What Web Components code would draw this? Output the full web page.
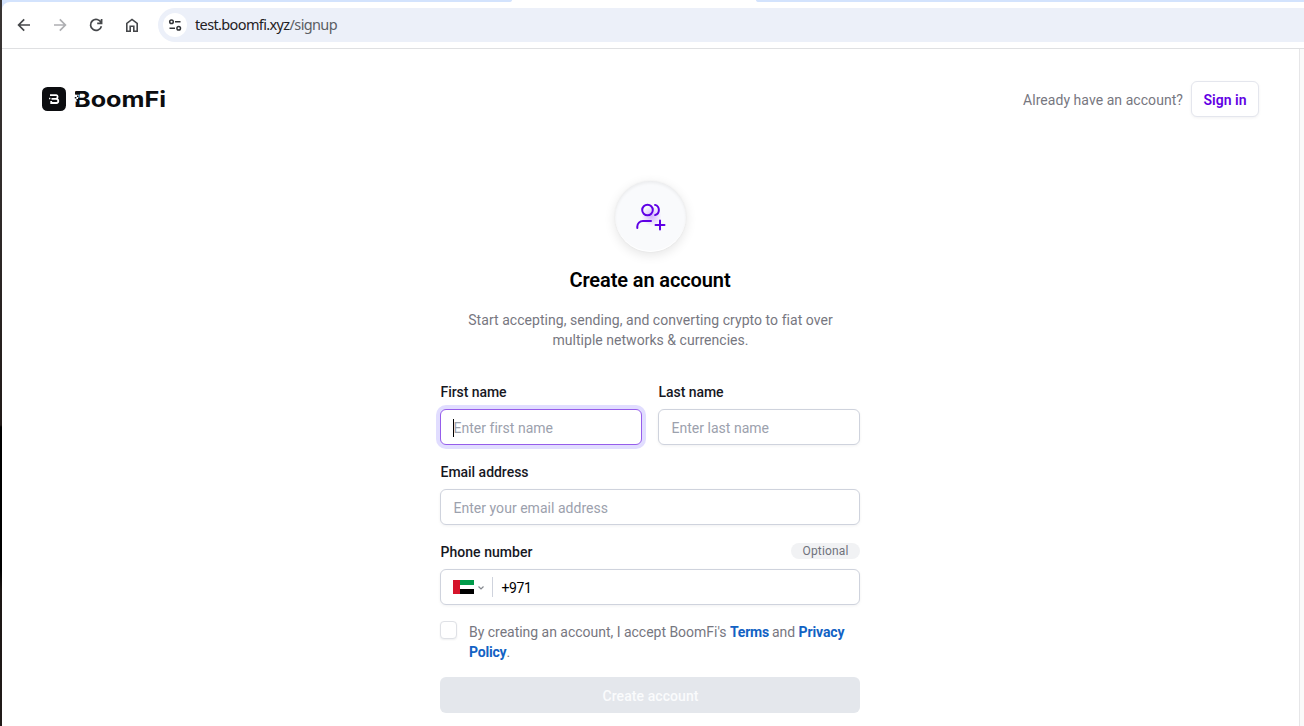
<!DOCTYPE html>
<html lang="en"><head><meta charset="utf-8"><title>BoomFi – Sign up</title>
<style>
html,body{margin:0;height:100%;overflow:hidden;background:#fff}
body{font-family:Roboto,"Liberation Sans",sans-serif;font-size:14px;line-height:20px;color:#77777f}
</style></head><body>
<browser-window></browser-window>
<script>
const define=(name,html,setup)=>customElements.define(name,class extends HTMLElement{
  constructor(){super();this.attachShadow({mode:'open'}).innerHTML=html;}
  connectedCallback(){if(setup)setup(this,this.shadowRoot);}
});

// Single line of text tracked to a given advance width.
define('fit-text',`<style>:host{display:inline-block;white-space:nowrap}span{display:inline-block}</style><span><slot></slot></span>`,(el,root)=>{
  const s=root.querySelector('span');
  s.style.letterSpacing='0';
  const n=el.textContent.length,w=+el.getAttribute('w');
  s.style.letterSpacing=((w-s.getBoundingClientRect().width)/n)+'px';
});

define('tool-bar',`<style>
:host{display:block}
.tabs{display:grid;grid-template-columns:510px 244px 1fr;height:2px;background:#fff}
.tabs i{background:#d3e3fd}.tabs i:first-child{border-bottom-right-radius:3px 2px}.tabs i:last-child{border-bottom-left-radius:3px 2px}
.bar{display:flex;align-items:center;height:46px;border-bottom:1px solid #dfe0e2;padding-left:12px;background:#fff;border-top-left-radius:8px}
.wrap{background:linear-gradient(90deg,#d3e3fd 9px,#fff 9px)}
svg{display:block;flex:none}
.nav{display:flex;gap:16px;margin-right:16px}
.omni{flex:1;display:flex;align-items:center;height:34px;border-radius:17px 0 0 17px;background:#ecf0f9;padding-left:5px;gap:8px;font:14.5px/20px "Noto Sans",sans-serif;color:#1f2023}
.omni fit-text{margin-bottom:2px}
.info{width:24px;height:24px;border-radius:50%;background:#fff;display:grid;place-items:center}
.path{color:#5b5e63}
</style>
<div class="tabs"><i></i><b></b><i></i></div>
<div class="wrap"><div class="bar"><div class="nav">
<svg width="20" height="20" fill="none" stroke="#45474a" stroke-width="1.7"><path d="M16 10H4.8M10.2 4.4 4.6 10l5.6 5.6"/></svg>
<svg width="20" height="20" fill="none" stroke="#aeafb2" stroke-width="1.7"><path d="M4 10h11.2M9.8 4.4l5.6 5.6-5.6 5.6"/></svg>
<svg width="20" height="20" fill="none" stroke="#45474a" stroke-width="1.7"><path d="M15.1 7.7A5.5 5.5 0 1 0 15.4 11.2M15.6 4v4.4h-4.4"/></svg>
<svg width="20" height="20" fill="none" stroke="#45474a" stroke-width="1.6"><path d="M4.8 16.2V8.3L10 4.4l5.2 3.9v7.9h-3.4v-4.9H8.2v4.9z"/></svg>
</div><div class="omni"><span class="info"><svg width="14" height="14" fill="none" stroke="#303236" stroke-width="1.5"><circle cx="3.5" cy="3.7" r="1.8"/><path d="M7 3.7h5.5M1.5 10.3H7"/><circle cx="10.7" cy="10.3" r="1.8"/></svg></span><fit-text w="142">test.boomfi.xyz<span class="path">/signup</span></fit-text></div></div></div>`);

define('boom-logo',`<style>
:host{display:flex;align-items:center;gap:8px;height:24px;color:#0c0d10}
svg{display:block;flex:none}
.name{position:relative;font:700 21.5px/24px Inter,sans-serif;width:91px}
.word{display:inline-block;transform-origin:0 50%}
.cut{position:absolute;left:0;top:0}
</style>
<svg width="24" height="24"><rect width="24" height="24" rx="5.5" fill="#0c0d10"/><path d="M8 8.1h6.4q1.2 0 1.2 1.6t-1.2 2.1q1.9.3 1.9 2.2T14.4 16H9.2v-2M9.5 11.8h5" fill="none" stroke="#fff" stroke-width="1.8"/><path d="M7 10.8h1.4v1.4H7z" fill="#fff"/></svg>
<div class="name"><span class="word">BoomFi</span><svg class="cut" width="10" height="24"><path d="M0 7.6h5v3H4v2.2H3v1.8H0z" fill="#fff"/><path d="M1 4.4h5v3H1zM.8 10h1.6v1.6H.8zM3 8.6h1.6v1.5H3zM2.4 12H4v1.5H2.4z" fill="#0c0d10"/></svg></div>`,(el,root)=>{
  const s=root.querySelector('.word');
  s.style.transform='scaleX('+92.5/s.offsetWidth+')';
});

define('site-header',`<style>
:host{display:flex;justify-content:space-between;align-items:center;height:36px;padding:32px 40px 0}
.right{display:flex;align-items:center;gap:8px}
button{font:600 14px/20px Roboto,sans-serif;color:#6200e4;width:68px;height:36px;padding:2px 0 0;border:1px solid #e4e6ed;border-radius:6px;background:#fff;box-shadow:0 1px 3px #1018280f;box-sizing:border-box}
.t{padding-top:1px}
</style><boom-logo></boom-logo><div class="right"><span class="t"><fit-text w="160">Already have an account?</fit-text></span><button><fit-text w="43">Sign in</fit-text></button></div>`);

define('user-badge',`<style>
:host{display:grid;place-items:center;width:71px;height:71px;border-radius:50%;background:#f9fafc;box-shadow:0 3px 12px #0000001c,0 0 2px #00000010,inset 0 2px 3px #0000000d,inset 0 -1px 1px #fff}
svg{display:block;margin:0 1.5px 1.5px 0}
</style><svg width="32" height="32" fill="none" stroke="#5f00e5" stroke-width="2" stroke-linecap="round"><defs><radialGradient id="g"><stop offset="0" stop-color="#9e50ff" stop-opacity=".42"/><stop offset="1" stop-color="#9e50ff" stop-opacity="0"/></radialGradient></defs><circle cx="17.5" cy="16" r="10" fill="url(#g)" stroke="none"/><circle cx="13.5" cy="10" r="5.3"/><path d="M21 4.9a5.3 5.3 0 0 1 0 10.2M3.3 28v-1.4a5.6 5.6 0 0 1 5.6-5.6H17M26 20.5v9M21.5 25h9"/></svg>`);

define('form-field',`<style>
:host{display:flex;flex-direction:column;gap:7px;min-width:0}
.top{display:flex;justify-content:space-between;height:20px;color:#17181f;font-weight:500;padding-left:.5px}
.box{box-sizing:border-box;height:36px;border:1px solid #cfd3dd;border-radius:6px;background:#fff;display:flex;align-items:center;padding:1px 12px 0;color:#9ca1ad;box-shadow:0 1px 3px #1018280f}
:host([focused]) .box{border-color:#965deb;box-shadow:0 0 0 4px #e1ddff}
:host([focused]) .box::before{content:"";width:1px;height:18px;margin-right:-1px;background:#000}
.box fit-text,::slotted(fit-text:not([slot])){margin-left:.5px}
</style><div class="top"><slot name="label"></slot><slot name="hint"></slot></div><div class="box"><slot></slot></div>`);

define('optional-pill',`<style>
:host{display:grid;place-items:center;width:69px;height:16px;margin-top:1px;border-radius:8px;background:#f1f2f4;color:#70727c;font-size:12px;line-height:16px;font-weight:400}
</style><fit-text w="46">Optional</fit-text>`);

define('phone-value',`<style>
:host{display:flex;align-items:center;height:34px;margin-top:-1px;color:#000}
svg{display:block}.flag{margin-right:3px}
.num{border-left:1px solid #cfd3dd;margin-left:7px;padding-left:8.5px;height:20px;line-height:22px}
</style><svg class="flag" width="21" height="14" shape-rendering="crispEdges"><path d="M7 0h14v5H7z" fill="#009b4a"/><path d="M7 5h14v4H7z" fill="#fff"/><path d="M7 9h14v5H7z"/><path d="M0 0h7v14H0z" fill="#d5142b"/></svg><svg width="8" height="8" fill="none" stroke="#85888f" stroke-width="1.2"><path d="M1.5 3.5 4 6l2.5-2.5"/></svg><span class="num"><fit-text w="30">+971</fit-text></span>`);

define('terms-check',`<style>
:host{display:flex;gap:12px}
.box{box-sizing:border-box;width:17px;height:18px;border:1px solid #dfe1e6;border-radius:4px;background:#fff;box-shadow:0 1px 2px #10182812;flex:none;margin-top:-1px}
b{font-weight:700;color:#1262c4}
.line{display:block;height:20px}
</style><span class="box"></span><div><span class="line"><fit-text w="257.5">By creating an account, I accept BoomFi's</fit-text><fit-text w="39" style="margin-left:3.5px"><b>Terms</b></fit-text><fit-text w="23" style="margin-left:3px">and</fit-text><fit-text w="46" style="margin-left:3.5px"><b>Privacy</b></fit-text></span><span class="line"><fit-text w="41"><b>Policy</b>.</fit-text></span></div>`);

define('signup-form',`<style>
:host{display:flex;flex-direction:column;width:420px;margin:64px auto 0;position:relative;left:-.5px}
user-badge{align-self:center;position:relative;left:.5px}
h1{margin:15px 0 0;font:600 20px/26px Roboto,sans-serif;color:#000;text-align:center}
.lead{text-align:center;margin:17px 0 32px;padding-left:1px}
.lead div{height:20px}
.fields{display:grid;grid-template-columns:1fr 1fr;gap:17px 16px}
.wide{grid-column:1/-1}
terms-check{margin-top:17px;height:40px}
button{height:36px;margin-top:15px;border:0;border-radius:6px;background:#e4e7ec;color:#fafbfc;font:500 14px/20px Roboto,sans-serif;padding:2px 0 0 1px}
</style>
<user-badge></user-badge>
<h1><fit-text w="161">Create an account</fit-text></h1>
<div class="lead"><div><fit-text w="364">Start accepting, sending, and converting crypto to fiat over</fit-text></div><div><fit-text w="196">multiple networks &amp; currencies.</fit-text></div></div>
<div class="fields">
<form-field focused><fit-text slot="label" w="66">First name</fit-text><fit-text w="99">Enter first name</fit-text></form-field>
<form-field><fit-text slot="label" w="65">Last name</fit-text><fit-text w="97.5">Enter last name</fit-text></form-field>
<form-field class="wide"><fit-text slot="label" w="88">Email address</fit-text><fit-text w="154.5">Enter your email address</fit-text></form-field>
<form-field class="wide"><fit-text slot="label" w="92">Phone number</fit-text><optional-pill slot="hint"></optional-pill><phone-value></phone-value></form-field>
</div>
<terms-check></terms-check>
<button><fit-text w="96">Create account</fit-text></button>`);

define('browser-window',`<style>
:host{display:grid;grid-template-columns:2px 1fr;height:726px;overflow:hidden}
.edge{background:linear-gradient(#393534 0,#302b2a 200px,#211a18 425px,#000 427px,#000 570px,#1c1614 590px,#211b19)}
.main{display:flex;flex-direction:column;min-width:0}
.view{flex:1;display:grid;grid-template-columns:1fr 5px;min-height:0}
.scroll{border-left:1px solid #e6e6e8;background:#fafafa;box-sizing:border-box}
</style><div class="edge"></div><div class="main"><tool-bar></tool-bar><div class="view"><div><site-header></site-header><signup-form></signup-form></div><div class="scroll"></div></div></div>`);
</script></body></html>
